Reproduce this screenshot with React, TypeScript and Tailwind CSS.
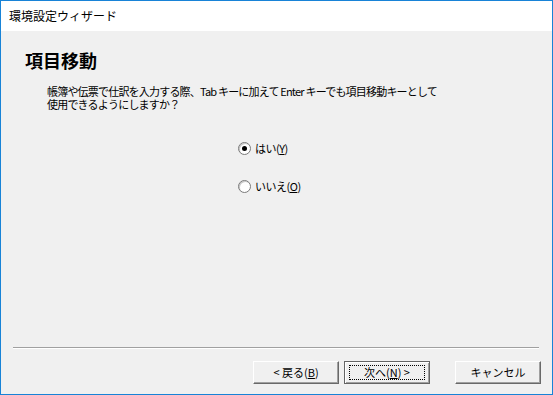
import React from 'react';

const font = { fontFamily: '"Noto Sans CJK JP", "Noto Sans", sans-serif' };

const Radio: React.FC<{ checked?: boolean; label: string; mnemonic: string }> = ({ checked, label, mnemonic }) => (
  <label className="flex items-center h-[14px] text-[11px] leading-[14px] text-black">
    <span className="w-[13px] h-[13px] rounded-full border border-[#7a7a7a] bg-white flex items-center justify-center shadow-[inset_1px_1px_0_#c8c8c8]">
      {checked && <span className="w-[5px] h-[5px] rounded-full bg-black" />}
    </span>
    <span className="ml-[4px] tracking-[-0.5px]">
      {label}(<span className="underline">{mnemonic}</span>)
    </span>
  </label>
);

const Button: React.FC<{ children: React.ReactNode; isDefault?: boolean }> = ({ children, isDefault }) => (
  <button
    className={
      'w-[86px] h-[23px] bg-[#f0f0f0] text-[11px] leading-none text-black flex items-center justify-center ' +
      (isDefault
        ? 'border border-[#646464] shadow-[inset_1px_1px_0_#ffffff,inset_-1px_-1px_0_#a0a0a0]'
        : 'border border-t-white border-l-white border-r-[#696969] border-b-[#696969] shadow-[inset_-1px_-1px_0_#a0a0a0]')
    }
  >
    {isDefault ? (
      <span className="w-[76px] h-[15px] border border-dotted border-black flex items-center justify-center">
        {children}
      </span>
    ) : (
      children
    )}
  </button>
);

export default function App() {
  return (
    <div
      className="w-[553px] h-[395px] border border-[#1883d7] bg-[#f0f0f0] flex flex-col box-border text-black"
      style={font}
    >
      <div className="h-[30px] bg-white flex items-center pl-[8px] text-[12px]">環境設定ウィザード</div>

      <div className="flex-1 flex flex-col">
        <h1 className="mt-[20px] ml-[24px] text-[18px] leading-[18px] font-bold">項目移動</h1>

        <div className="mt-[16px] ml-[46px] text-[11px] tracking-[-0.8px] flex flex-col">
          <div className="h-[13px] leading-[13px]">
            帳簿や伝票で仕訳を入力する際、Tab キーに加えて Enter キーでも項目移動キーとして
          </div>
          <div className="h-[13px] leading-[13px]">使用できるようにしますか？</div>
        </div>

        <div className="mt-[30px] ml-[237px] flex flex-col gap-[24px]">
          <Radio checked label="はい" mnemonic="Y" />
          <Radio label="いいえ" mnemonic="O" />
        </div>

        <div className="mt-auto ml-[12px] mr-[13px] border-t border-t-[#a0a0a0] border-b border-b-white" />

        <div className="mt-[12px] mb-[10px] mr-[11px] flex justify-end">
          <Button>
            &lt; 戻る(<span className="underline">B</span>)
          </Button>
          <div className="ml-[5px]">
            <Button isDefault>
              次へ(<span className="underline">N</span>) &gt;
            </Button>
          </div>
          <div className="ml-[25px]">
            <Button>キャンセル</Button>
          </div>
        </div>
      </div>
    </div>
  );
}
